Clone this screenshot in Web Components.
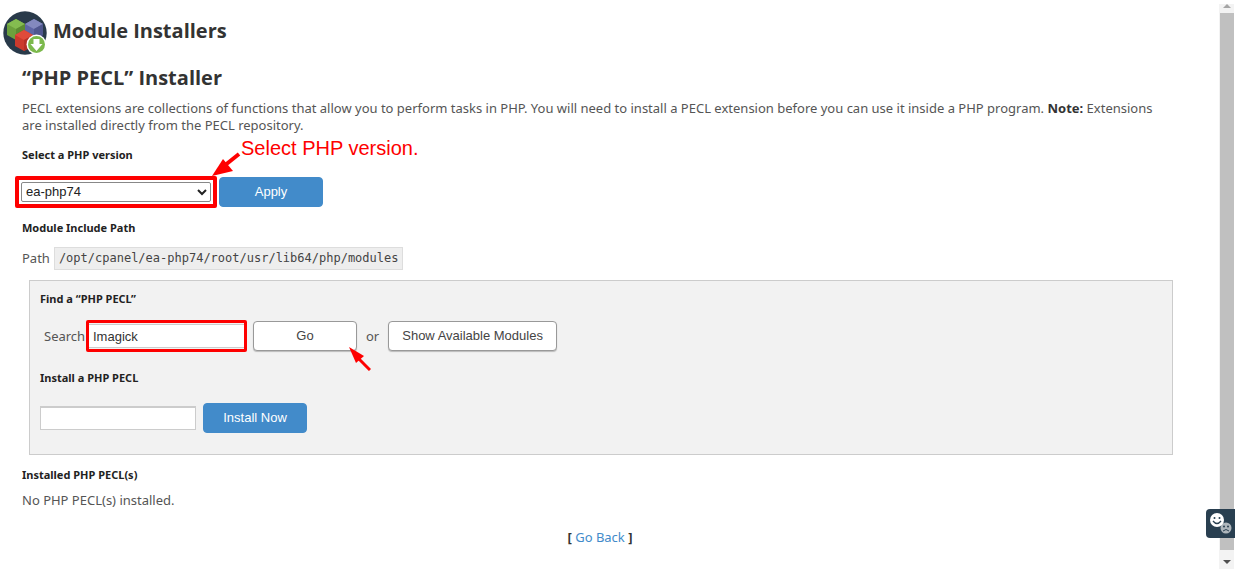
<!DOCTYPE html>
<html lang="en">
<head>
<meta charset="utf-8">
<title>Module Installers</title>
<style>
  body { margin: 0; background: #fff; color: #555; font: 13px/17px "Noto Sans", "Open Sans", sans-serif; }
</style>
</head>
<body>
<module-page></module-page>
<script>
const define = (name, html) => {
  const template = document.createElement('template');
  template.innerHTML = html;
  customElements.define(name, class extends HTMLElement {
    constructor() {
      super();
      this.attachShadow({ mode: 'open' }).append(template.content.cloneNode(true));
    }
  });
};

define('module-logo', `
<style>:host { display: block; width: 44px; height: 44px; flex: none } svg { display: block }</style>
<svg width="44" height="44" viewBox="0 0 44 44" aria-hidden="true">
  <circle cx="22" cy="22" r="21.7" fill="#293a4a"/>
  <path d="M31 8l9 5v11l-9 5-9-5V13z" fill="#5f66a6"/>
  <path d="M31 8l9 5-9 5-9-5z" fill="#8389be"/>
  <path d="M31 18l9-5v11l-9 5z" fill="#50578f"/>
  <path d="M13 8l9 5v11l-9 5-9-5V13z" fill="#6ca13d"/>
  <path d="M13 8l9 5-9 5-9-5z" fill="#84bc50"/>
  <path d="M13 18l9-5v11l-9 5z" fill="#5c8c32"/>
  <path d="M21 19l9 5v11l-9 5-9-5V24z" fill="#cb3a2d"/>
  <path d="M21 19l9 5-9 5-9-5z" fill="#df4b3b"/>
  <path d="M21 29l9-5v11l-9 5z" fill="#b63027"/>
  <circle cx="33.500" cy="33.500" r="10" fill="#fff"/>
  <circle cx="33.500" cy="33.500" r="8.500" fill="#7cb94c"/>
  <path d="M30.500 28h6v5h3l-6 7-6-7h3z" fill="#fff"/>
</svg>`);

define('action-button', `
<style>
  :host { display: block; flex: none }
  button { box-sizing: border-box; display: block; min-width: 104px; height: 30px; padding: 0 13px; border: 1px solid #999;
    border-radius: 4px; background: #fff; color: #444; font: 13px/20px "Liberation Sans", Arial, sans-serif; box-shadow: 0 1px 1px #bbb; white-space: nowrap }
  :host([primary]) button { background: #428bca; border-color: #428bca; color: #fff; box-shadow: none }
</style>
<button type="button"><slot></slot></button>`);

define('section-title', `
<style>:host { display: block } h4 { margin: 0; color: #222; font-size: 11px; line-height: 16px; font-weight: 700 }</style>
<h4><slot></slot></h4>`);

define('version-picker', `
<style>
  :host { display: flex; align-items: center; gap: 8px; height: 30px; margin-left: -1px }
  .field { position: relative; display: flex }
  select { box-sizing: border-box; width: 190px; height: 20px; appearance: none; border: 1px solid #888; border-radius: 2px; padding: 0 4px;
    margin: 0; background: #fff; color: #222; font: 13px/18px "Liberation Sans", Arial, sans-serif }
  .chevron { position: absolute; right: 4px; top: 7px }
  .mark { position: absolute; inset: -6px; border: 4px solid #fe0000; border-radius: 2px; pointer-events: none }
  .note { position: absolute; left: 190px; top: -48px; display: flex; color: #fe0000; font: 20px/28px "Liberation Sans", Arial, sans-serif; white-space: nowrap }
  .note svg { flex: none; margin-top: 18px }
</style>
<div class="field">
  <select aria-label="PHP version"><option>ea-php74</option></select>
  <svg class="chevron" width="10" height="7" viewBox="0 0 10 7" aria-hidden="true"><path d="M1 1l4 4 4-4" fill="none" stroke="#222" stroke-width="2"/></svg>
  <span class="mark"></span>
  <span class="note"><svg width="30" height="26" viewBox="0 0 30 26" aria-hidden="true"><path d="M28 2L13 14" stroke="#fe0000" stroke-width="4"/><path d="M1 24L12 7l10 12z" fill="#fe0000"/></svg>Select PHP version.</span>
</div>
<action-button primary>Apply</action-button>`);

define('module-search', `
<style>
  :host { display: flex; align-items: center; height: 30px; padding-left: 4px }
  label { width: 44px }
  .field { position: relative; display: flex; margin-right: 8px }
  input { box-sizing: border-box; width: 157px; height: 24px; border: 1px solid #ccc; margin: 0; padding: 0 4px;
    background: #fff; color: #333; font: 13px/20px "Liberation Sans", Arial, sans-serif }
  .mark { position: absolute; inset: -4px -2px; border: 3px solid #fe0000; border-radius: 2px; pointer-events: none }
  .go { position: relative }
  .arrow { position: absolute; right: -14px; top: 26px }
  .or { padding: 0 9px }
</style>
<label for="search">Search</label>
<div class="field"><input id="search" type="text" value="Imagick"><span class="mark"></span></div>
<div class="go"><action-button>Go</action-button>
  <svg class="arrow" width="22" height="24" viewBox="0 0 22 24" aria-hidden="true"><path d="M10 12l11 11" stroke="#fe0000" stroke-width="3"/><path d="M0 0l15 9-8 7z" fill="#fe0000"/></svg>
</div>
<span class="or">or</span>
<action-button>Show Available Modules</action-button>`);

define('module-install', `
<style>
  :host { display: flex; align-items: center; gap: 7px; height: 30px }
  input { box-sizing: border-box; width: 156px; height: 24px; border: 1px solid #ccc; border-top: 2px solid #ccc; margin: 0; padding: 0 4px; background: #fff }
</style>
<input type="text" aria-label="PHP PECL to install"><action-button primary>Install Now</action-button>`);

define('search-panel', `
<style>
  :host { display: block; box-sizing: border-box; border: 1px solid #ccc; background: #f2f2f2; padding: 10px 10px 21px }
  module-search { margin: 14px 0 19px }
  module-install { margin-top: 17px }
</style>
<section-title>Find a “PHP PECL”</section-title>
<module-search></module-search>
<section-title>Install a PHP PECL</section-title>
<module-install></module-install>`);

define('scroll-rail', `
<style>
  :host { display: flex; flex-direction: column; width: 15px; background: #f3f3f3; position: relative }
  svg { display: block; flex: none }
  .thumb { flex: 1; margin-left: 1px; background: #c0c0c0 }
  button { position: absolute; right: -1px; bottom: 31px; width: 29px; height: 29px; padding: 0; border: 0; border-radius: 4px 0 0 4px; background: #293f50 }
</style>
<svg width="15" height="9" aria-hidden="true"><path d="M4 4l4-4 4 4z" fill="#a5a5a5"/></svg>
<div class="thumb"></div>
<svg width="15" height="19" aria-hidden="true"><path d="M4 10h8l-4 4z" fill="#505050"/></svg>
<button type="button" aria-label="Feedback">
  <svg width="29" height="29" viewBox="0 0 29 29" aria-hidden="true">
    <circle cx="20" cy="19" r="5.500" fill="#aeb6bc"/><path d="M17 22q3-3 6 0" fill="none" stroke="#293f50"/><circle cx="18" cy="17.500" r="1" fill="#293f50"/><circle cx="22" cy="17.500" r="1" fill="#293f50"/>
    <circle cx="11" cy="11" r="7" fill="#fff"/><path d="M7 12q4 5 8 0" fill="none" stroke="#293f50" stroke-width="1.300"/><circle cx="8.500" cy="9" r="1" fill="#293f50"/><circle cx="13.500" cy="9" r="1" fill="#293f50"/>
  </svg>
</button>`);

define('module-page', `
<style>
  :host { display: flex; box-sizing: border-box; min-height: 100vh }
  main { flex: 1; min-width: 0; padding: 11px 46px 14px 22px }
  header { display: flex; gap: 6px; margin-left: -19px }
  h1, h2 { margin: 0; color: #333; font: 700 20px/28px "Open Sans", "Noto Sans", sans-serif }
  h1 { margin-top: 6px }
  h2 { margin-top: 9px }
  p { margin: 0 }
  .intro { margin: 8px 0 13px }
  b { color: #333 }
  version-picker { margin-top: 14px; margin-bottom: 13px }
  .path { display: flex; align-items: center; gap: 4px; margin: 11px 0 10px }
  code { border: 1px solid #ddd; background: #eee; padding: 0 4px; color: #444; font: 12px/21px "DejaVu Sans Mono", monospace }
  search-panel { margin: 0 0 12px 7px }
  .back { margin-top: 20px; padding-left: 5px; text-align: center; color: #222 }
  .none { margin-top: 9px }
  a { color: #428bca; text-decoration: none }
  scroll-rail { margin: 4px 1px 0 0 }
</style>
<main>
  <header><module-logo></module-logo><h1>Module Installers</h1></header>
  <h2>“PHP PECL” Installer</h2>
  <p class="intro">PECL extensions are collections of functions that allow you to perform tasks in PHP. You will need to install a PECL extension before you can use it inside a PHP program. <b>Note:</b> Extensions are installed directly from the PECL repository.</p>
  <section-title>Select a PHP version</section-title>
  <version-picker></version-picker>
  <section-title>Module Include Path</section-title>
  <div class="path"><span>Path</span><code>/opt/cpanel/ea-php74/root/usr/lib64/php/modules</code></div>
  <search-panel></search-panel>
  <section-title>Installed PHP PECL(s)</section-title>
  <p class="none">No PHP PECL(s) installed.</p>
  <p class="back"><b>[</b> <a href="#back">Go Back</a> <b>]</b></p>
</main>
<scroll-rail></scroll-rail>`);
</script>
</body>
</html>
